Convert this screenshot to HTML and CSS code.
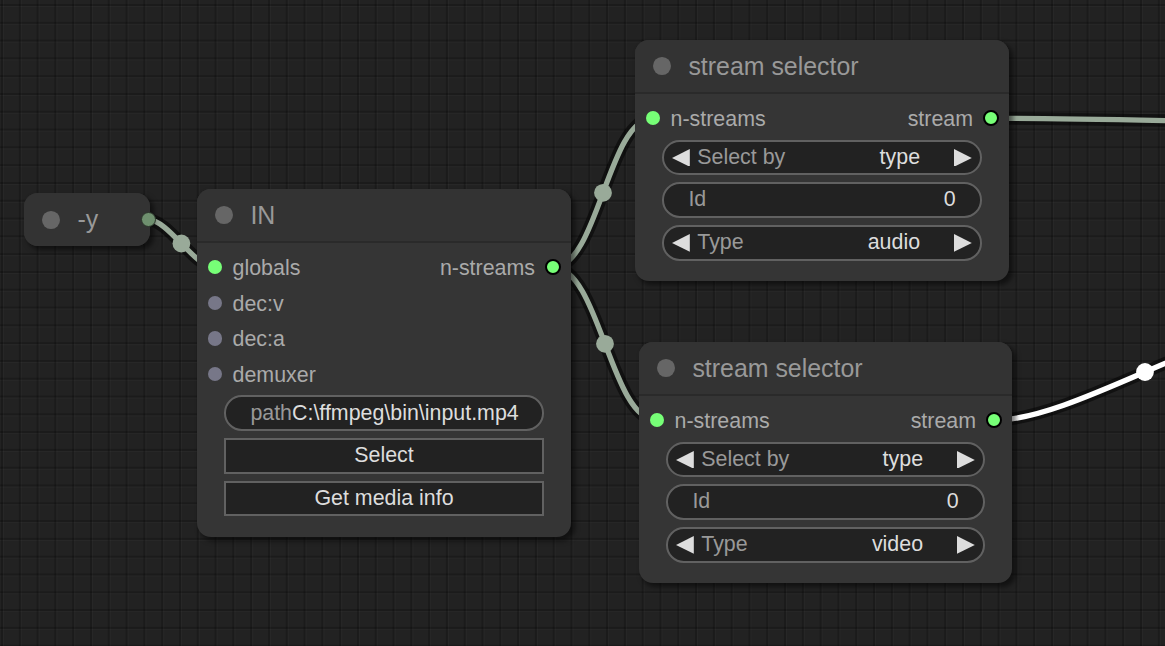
FILE: index.html
```html
<!DOCTYPE html>
<html>
<head>
<meta charset="utf-8">
<link rel="stylesheet" href="styles.css">
</head>
<body>
<div class="canvas">
  <svg class="links" width="1165" height="646" viewBox="0 0 1165 646">
    <path class="link-border" d="M148,219.7 C168.5,219.7 194.3,267.3 214.8,267.3"/>
    <path class="link-border" d="M553.2,267.3 C598,267.3 608,118.3 652.8,118.3"/>
    <path class="link-border" d="M553.2,267.3 C599.4,267.3 610.6,420.3 656.8,420.3"/>
    <path class="link-border" d="M991.2,118.3 C1093,118.3 1298,124 1400,124"/>
    <path class="link-border" d="M994.2,420.3 C1073.5,420.3 1216.5,323.7 1295.8,323.7"/>
    <path class="link" d="M148,219.7 C168.5,219.7 194.3,267.3 214.8,267.3"/>
    <path class="link" d="M553.2,267.3 C598,267.3 608,118.3 652.8,118.3"/>
    <path class="link" d="M553.2,267.3 C599.4,267.3 610.6,420.3 656.8,420.3"/>
    <path class="link" d="M991.2,118.3 C1093,118.3 1298,124 1400,124"/>
    <path class="link link-white" d="M994.2,420.3 C1073.5,420.3 1216.5,323.7 1295.8,323.7"/>
    <circle class="mid" cx="181.4" cy="243.5" r="8.9"/>
    <circle class="mid" cx="603" cy="192.8" r="8.9"/>
    <circle class="mid" cx="605" cy="343.8" r="8.9"/>
    <circle class="mid mid-white" cx="1145" cy="372" r="8.9"/>
  </svg>

  <div class="node collapsed n-y">
    <div class="title"><span class="box"></span><span>-y</span></div>
    <span class="collapsed-out"></span>
  </div>

  <div class="node n-in">
    <div class="title"><span class="box"></span><span>IN</span></div>
    <div class="body">
      <div class="slots">
        <div class="slot-row">
          <div class="slot slot-in"><span class="dot"></span><span class="lbl">globals</span></div>
          <div class="slot slot-out"><span class="lbl">n-streams</span><span class="dot dot-out"></span></div>
        </div>
        <div class="slot-row">
          <div class="slot slot-in"><span class="dot dot-off"></span><span class="lbl">dec:v</span></div>
        </div>
        <div class="slot-row">
          <div class="slot slot-in"><span class="dot dot-off"></span><span class="lbl">dec:a</span></div>
        </div>
        <div class="slot-row">
          <div class="slot slot-in"><span class="dot dot-off"></span><span class="lbl">demuxer</span></div>
        </div>
      </div>
      <div class="widgets">
        <div class="w w-pill w-text"><span class="k">path</span><span class="v">C:\ffmpeg\bin\input.mp4</span></div>
        <div class="w w-btn"><span>Select</span></div>
        <div class="w w-btn"><span>Get media info</span></div>
      </div>
    </div>
  </div>

  <div class="node n-ss1">
    <div class="title"><span class="box"></span><span>stream selector</span></div>
    <div class="body">
      <div class="slots">
        <div class="slot-row">
          <div class="slot slot-in"><span class="dot"></span><span class="lbl">n-streams</span></div>
          <div class="slot slot-out"><span class="lbl">stream</span><span class="dot dot-out"></span></div>
        </div>
      </div>
      <div class="widgets">
        <div class="w w-pill w-combo">
          <svg class="tri" viewBox="0 0 10 10"><polygon points="10,0 0,5 10,10"/></svg>
          <span class="k">Select by</span><span class="v">type</span>
          <svg class="tri" viewBox="0 0 10 10"><polygon points="0,0 10,5 0,10"/></svg>
        </div>
        <div class="w w-pill w-num"><span class="k">Id</span><span class="v">0</span></div>
        <div class="w w-pill w-combo">
          <svg class="tri" viewBox="0 0 10 10"><polygon points="10,0 0,5 10,10"/></svg>
          <span class="k">Type</span><span class="v">audio</span>
          <svg class="tri" viewBox="0 0 10 10"><polygon points="0,0 10,5 0,10"/></svg>
        </div>
      </div>
    </div>
  </div>

  <div class="node n-ss2">
    <div class="title"><span class="box"></span><span>stream selector</span></div>
    <div class="body">
      <div class="slots">
        <div class="slot-row">
          <div class="slot slot-in"><span class="dot"></span><span class="lbl">n-streams</span></div>
          <div class="slot slot-out"><span class="lbl">stream</span><span class="dot dot-out"></span></div>
        </div>
      </div>
      <div class="widgets">
        <div class="w w-pill w-combo">
          <svg class="tri" viewBox="0 0 10 10"><polygon points="10,0 0,5 10,10"/></svg>
          <span class="k">Select by</span><span class="v">type</span>
          <svg class="tri" viewBox="0 0 10 10"><polygon points="0,0 10,5 0,10"/></svg>
        </div>
        <div class="w w-pill w-num"><span class="k">Id</span><span class="v">0</span></div>
        <div class="w w-pill w-combo">
          <svg class="tri" viewBox="0 0 10 10"><polygon points="10,0 0,5 10,10"/></svg>
          <span class="k">Type</span><span class="v">video</span>
          <svg class="tri" viewBox="0 0 10 10"><polygon points="0,0 10,5 0,10"/></svg>
        </div>
      </div>
    </div>
  </div>
</div>
</body>
</html>
```
FILE: styles.css
```css
* { box-sizing: border-box; }
html, body { margin: 0; padding: 0; background: #222; }
body { font-family: "Liberation Sans", Arial, sans-serif; }

.canvas {
  position: relative;
  width: 1165px;
  height: 646px;
  overflow: hidden;
  background-color: #222;
  background-image:
    linear-gradient(90deg, rgba(0,0,0,0.22) 0 2px, rgba(255,255,255,0.025) 2px 3px, transparent 3px),
    linear-gradient(180deg, rgba(0,0,0,0.22) 0 2px, rgba(255,255,255,0.025) 2px 3px, transparent 3px);
  background-size: 17.8px 17.8px;
  background-position: 1px 4px;
}

.links { position: absolute; left: 0; top: 0; }
.link-border { fill: none; stroke: rgba(0,0,0,0.5); stroke-width: 12.5; }
.link { fill: none; stroke: #9a9; stroke-width: 5.3; }
.link-white { stroke: #fff; }
.mid { fill: #9a9; }
.mid-white { fill: #fff; }

.node {
  position: absolute;
  background: #353535;
  border-radius: 14px;
  box-shadow: 3.5px 3.5px 5px rgba(0,0,0,0.5);
  display: flex;
  flex-direction: column;
}
.n-y { left: 24px; top: 193px; width: 126px; }
.n-in { left: 197px; top: 189px; width: 374px; }
.n-ss1 { left: 635px; top: 40px; width: 374px; }
.n-ss2 { left: 639px; top: 342px; width: 373px; }

.title {
  height: 52.4px;
  display: flex;
  align-items: center;
  gap: 17.8px;
  padding-left: 17.8px;
  background: #333;
  border-radius: 14px 14px 0 0;
  color: #999;
  font-size: 24.9px;
  line-height: 1;
  white-space: nowrap;
}
.collapsed { background: #333; }
.collapsed .title { height: 53.4px; border-radius: 14px; }
.box { width: 17.8px; height: 17.8px; border-radius: 50%; background: #666; flex: none; }

.collapsed-out {
  position: absolute;
  right: -5.5px;
  top: 19.2px;
  width: 15px;
  height: 15px;
  border-radius: 50%;
  background: #6f906f;
  border: 1px solid #2b352b;
}

.body { border-top: 2px solid rgba(0,0,0,0.2); }
.slots { padding-top: 6.1px; }
.slot-row {
  height: 35.6px;
  display: flex;
  align-items: center;
  justify-content: space-between;
  padding: 0 10px 0 10.7px;
  font-size: 21.4px;
  line-height: 1;
  color: #aaa;
  white-space: nowrap;
}
.slot { display: flex; align-items: center; }
.slot-in { gap: 10.7px; }
.slot-out { gap: 10px; margin-left: auto; }
.lbl { padding-top: 3px; }
.dot { width: 14.2px; height: 14.2px; border-radius: 50%; background: #7f7; flex: none; }
.dot-off { background: #778; }
.dot-out { width: 16px; height: 16px; border: 2px solid #000; }

.widgets {
  padding: 3.6px 26.7px 20.5px;
  display: flex;
  flex-direction: column;
  gap: 7.1px;
}
.w {
  height: 35.6px;
  background: #222;
  border: 2px solid #616161;
  display: flex;
  align-items: center;
  font-size: 21.4px;
  line-height: 1;
  color: #ddd;
  white-space: nowrap;
}
.w-pill { border-radius: 17.8px; }
.w .k { color: #999; }
.w-text, .w-num { padding: 0 24.7px; justify-content: space-between; }
.w-btn { justify-content: center; }
.w-combo { padding: 0 8.7px; }
.w-combo .k { margin-left: 7.1px; margin-right: auto; }
.w-combo .v { margin-right: 33.8px; }
.tri { width: 17.8px; height: 17.8px; fill: #ddd; flex: none; }
```
